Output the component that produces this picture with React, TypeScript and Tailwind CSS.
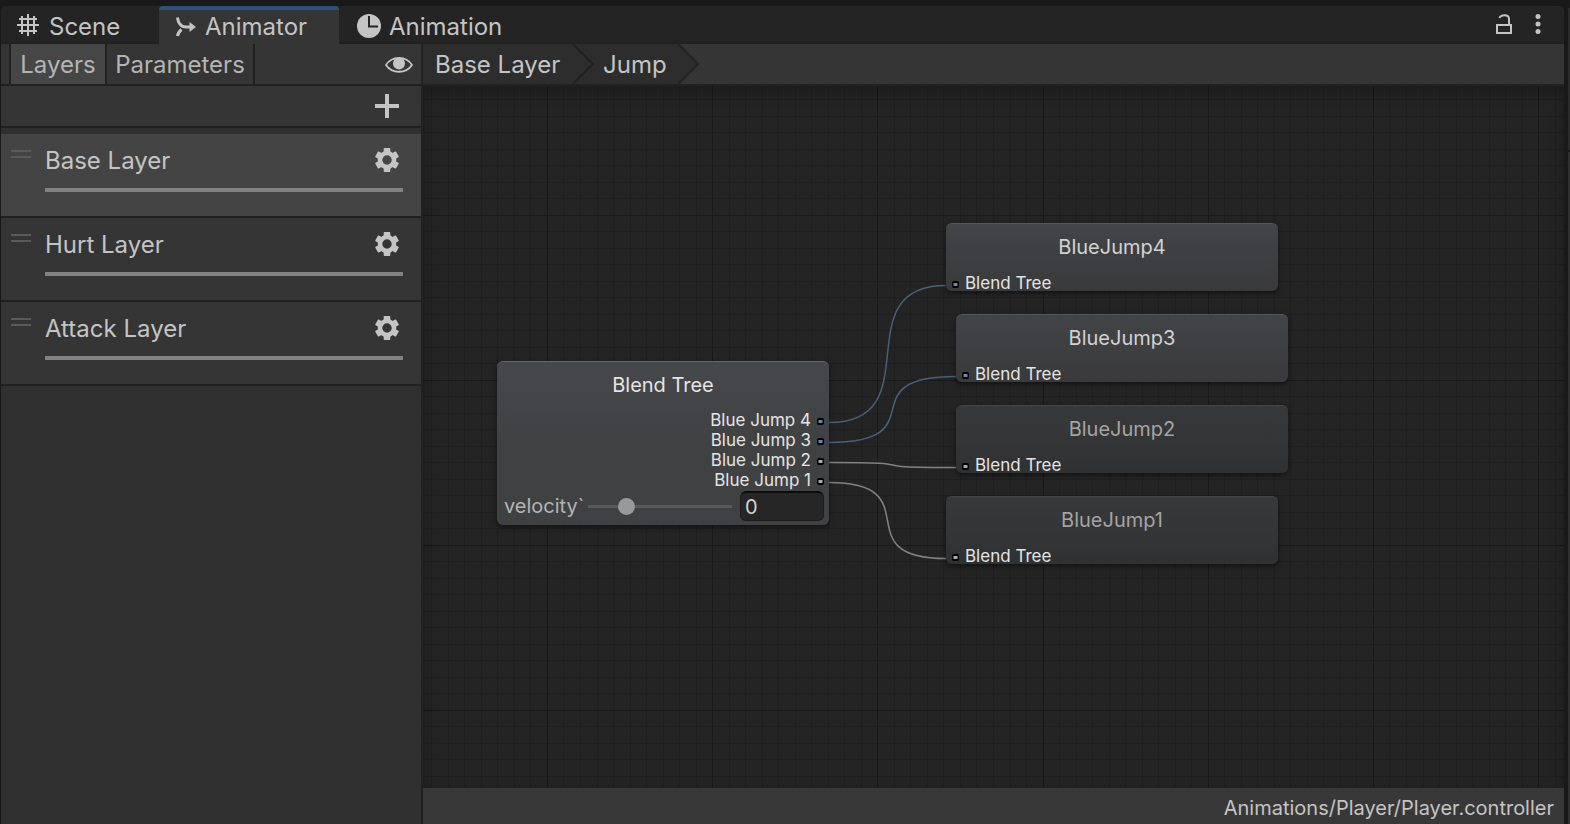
import React from "react";

type Tone = "blue" | "gray";

const wires: { d: string; tone: Tone }[] = [
  { d: "M406 336.5C509 336.5 420 199.5 523 199.5", tone: "blue" },
  { d: "M406 356.5C516 356.5 423 290.5 533 290.5", tone: "blue" },
  { d: "M406 376.5C516 376.5 423 381.5 533 381.5", tone: "gray" },
  { d: "M406 396.5C509 396.5 420 472.5 523 472.5", tone: "gray" },
];

const steps = Array.from({ length: 100 }, (_, i) => ({
  x: Math.floor(i * 16.52 + 0.45),
  y: Math.floor(i * 16.5),
  major: i % 10 === 0,
}));

function SceneIcon() {
  return (
    <svg className="mb-[2px] size-[22px]" viewBox="0 0 22 22" fill="none" stroke="#c4c4c4" strokeWidth="2" aria-hidden="true">
      <path d="M5 2V20M11 0V22M17 2V20M2 5H20M0 11H22M2 17H20" />
    </svg>
  );
}

function AnimatorIcon() {
  return (
    <svg className="h-5 w-[22px]" viewBox="0 0 22 20" fill="none" aria-hidden="true">
      <path d="M2.5 0.5C3 6 6 10 11 10H16" stroke="#c4c4c4" strokeWidth="3" />
      <path d="M2.5 19C3 16 4 14.500 6.500 12.5" stroke="#c4c4c4" strokeWidth="3" />
      <path d="M14.500 5L21 10L14.500 15Z" fill="#c4c4c4" />
    </svg>
  );
}

function ClockIcon() {
  return (
    <svg className="size-6" viewBox="0 0 24 24" aria-hidden="true">
      <circle cx="12" cy="12" r="12" fill="#c4c4c4" />
      <path d="M12 2V12.5H21" fill="none" stroke="#242424" strokeWidth="2" />
    </svg>
  );
}

function EyeIcon() {
  return (
    <svg className="h-[18px] w-7" viewBox="0 0 28 18" aria-hidden="true">
      <path d="M1 9C7 -0.5 21 -0.5 27 9C21 18 7 18 1 9Z" fill="none" stroke="#c4c4c4" strokeWidth="1.8" />
      <circle cx="14" cy="7.5" r="6" fill="#c4c4c4" />
    </svg>
  );
}

function LockIcon() {
  return (
    <svg className="h-5 w-4" viewBox="0 0 16 20" fill="none" stroke="#c4c4c4" strokeWidth="2" aria-hidden="true">
      <rect x="1" y="11" width="14" height="8" />
      <path d="M3.5 4C4.5 0.5 13 -0.5 13 5V11" />
    </svg>
  );
}

function GearIcon() {
  return (
    <svg className="size-6" viewBox="0 0 24 24" fill="#c4c4c4" aria-hidden="true">
      <circle cx="12" cy="12" r="7" fill="none" stroke="#c4c4c4" strokeWidth="4.6" />
      {[0, 60, 120, 180, 240, 300].map((a) => (
        <rect key={a} x="8.7" y="0" width="6.6" height="6" rx="0.8" transform={`rotate(${a} 12 12)`} />
      ))}
    </svg>
  );
}

function Port({ tone }: { tone: Tone }) {
  return (
    <svg className="mt-[2px] size-[7px] shrink-0" viewBox="0 0 7 7" aria-hidden="true">
      <rect width="7" height="7" rx="2" fill="#000" />
      <rect x="1.500" y="2" width="4" height="3" fill={tone === "blue" ? "#6c87b3" : "#aaaaaa"} />
    </svg>
  );
}

function LayerRow({ name, selected = false }: { name: string; selected?: boolean }) {
  return (
    <li className={`flex h-[84px] border-b-2 border-[#212121] pl-[10px] pr-[18px] ${selected ? "bg-[#444444]" : "bg-[#353535]"}`}>
      <span className="mt-4 h-2 w-5 shrink-0 border-y-2 border-[#5a5a5a]" />
      <div className="ml-[14px] flex grow flex-col">
        <div className="flex h-[54px] items-center justify-between pr-1">
          <span>{name}</span>
          <button type="button" className="pb-[2px]" aria-label={`${name} settings`}>
            <GearIcon />
          </button>
        </div>
        <div className="h-1 bg-[#828282]" />
      </div>
    </li>
  );
}

function MotionNode({ name, place, tone }: { name: string; place: string; tone: Tone }) {
  const colors =
    tone === "blue"
      ? "border-[#56575a] from-[#424447] to-[#3a3a3c] text-[#d2d2d2]"
      : "border-[#454648] from-[#38393b] to-[#303133] text-[#a4a4a4]";
  return (
    <div
      className={`absolute flex h-[68px] w-[332px] flex-col justify-between rounded-md border-t bg-linear-to-b shadow-[0_2px_5px_rgba(0,0,0,0.5)] ${colors} ${place}`}
    >
      <div className="pt-2 text-center text-[20px] leading-[30px]">{name}</div>
      <div className="flex items-center gap-[6px] pl-[6px] text-[17px] leading-4 text-[#e4e4e4]">
        <Port tone={tone} />
        Blend Tree
      </div>
    </div>
  );
}

function BlendTreeNode() {
  const outputs: { name: string; tone: Tone }[] = [
    { name: "Blue Jump 4", tone: "blue" },
    { name: "Blue Jump 3", tone: "blue" },
    { name: "Blue Jump 2", tone: "gray" },
    { name: "Blue Jump 1", tone: "gray" },
  ];
  return (
    <div className="absolute left-[74px] top-[275px] h-[164px] w-[332px] rounded-md border-t border-[#66676a] bg-linear-to-b from-[#47484b] via-[#3f4143] to-[#414144] shadow-[0_2px_5px_rgba(0,0,0,0.5)]">
      <div className="pt-2 text-center text-[20px] leading-[30px] text-[#e4e4e4]">Blend Tree</div>
      <ul className="mt-[10px] text-[17px] leading-5 text-[#e4e4e4]">
        {outputs.map((o) => (
          <li key={o.name} className="flex items-center justify-end gap-[6px] pr-[5px]">
            {o.name}
            <Port tone={o.tone} />
          </li>
        ))}
      </ul>
      <div className="flex h-8 items-center pl-[7px] pr-[5px] text-[20px] text-[#b4b4b4]">
        <label htmlFor="velocity" className="w-[82px] shrink-0 whitespace-nowrap">
          velocity`
        </label>
        <input
          id="velocity"
          type="range"
          min="0"
          max="100"
          defaultValue="24"
          className="ml-[2px] h-[18px] w-36 shrink-0 appearance-none bg-transparent [&::-webkit-slider-runnable-track]:h-[3px] [&::-webkit-slider-runnable-track]:bg-[#5a5a5a] [&::-webkit-slider-thumb]:-mt-[7px] [&::-webkit-slider-thumb]:size-[17px] [&::-webkit-slider-thumb]:appearance-none [&::-webkit-slider-thumb]:rounded-full [&::-webkit-slider-thumb]:bg-[#999999]"
        />
        <input
          type="text"
          aria-label="velocity value"
          defaultValue="0"
          className="ml-2 h-[30px] w-0 grow rounded-md border border-t-2 border-[#1c1c1c] border-t-[#0d0d0d] bg-[#262626] px-1 text-[#d2d2d2]"
        />
      </div>
    </div>
  );
}

function GraphCanvas() {
  return (
    <section className="relative grow overflow-hidden bg-[#242424]" aria-label="Blend tree graph">
      <svg className="absolute inset-0 size-full" aria-hidden="true">
        <defs>
          <pattern id="grid" x="124" y="129" width="1652" height="1650" patternUnits="userSpaceOnUse">
            {steps
              .slice()
              .sort((a, b) => Number(a.major) - Number(b.major))
              .map((s) => (
                <g key={s.x} fill={s.major ? "#191919" : "#1f1f1f"}>
                  <rect x={s.x} y="0" width="1" height="1650" />
                  <rect x="0" y={s.y} width="1652" height="1" />
                </g>
              ))}
          </pattern>
        </defs>
        <rect width="100%" height="100%" fill="url(#grid)" />
        {wires.map((w) => (
          <path key={w.d} d={w.d} fill="none" stroke={w.tone === "blue" ? "#48607f" : "#828282"} strokeWidth="1.5" />
        ))}
      </svg>
      <div className="absolute inset-0 shadow-[inset_0_6px_16px_rgba(0,0,0,0.25)]" />
      <BlendTreeNode />
      <MotionNode name="BlueJump4" tone="blue" place="left-[523px] top-[137px]" />
      <MotionNode name="BlueJump3" tone="blue" place="left-[533px] top-[228px]" />
      <MotionNode name="BlueJump2" tone="gray" place="left-[533px] top-[319px]" />
      <MotionNode name="BlueJump1" tone="gray" place="left-[523px] top-[410px]" />
    </section>
  );
}

export default function App() {
  return (
    <div className="flex h-screen bg-[#191919] pl-px pt-[6px] font-['Inter',sans-serif] text-[24px] leading-none text-[#c4c4c4]">
      <div className="flex min-w-0 grow flex-col overflow-hidden rounded-t-md bg-[#353535]">
        <header className="flex h-[38px] shrink-0 bg-[#242424]">
          <div className="flex grow" role="tablist">
            <button type="button" role="tab" className="flex w-[158px] items-center gap-[10px] border-b-2 border-[#212121] pl-4 pt-1">
              <SceneIcon />
              <span className="pt-[2px]">Scene</span>
            </button>
            <button type="button" role="tab" aria-selected="true" className="flex w-[180px] items-center gap-2 rounded-t border-t-4 border-[#2c527c] bg-[#353535] pl-4">
              <AnimatorIcon />
              <span>Animator</span>
            </button>
            <button type="button" role="tab" className="flex grow items-center gap-2 border-b-2 border-[#212121] pl-[18px] pt-1">
              <ClockIcon />
              <span className="pt-[2px]">Animation</span>
            </button>
          </div>
          <div className="flex items-center gap-[23px] border-b-2 border-[#212121] pr-[23px]">
            <button type="button" aria-label="Lock">
              <LockIcon />
            </button>
            <button type="button" aria-label="More options">
              <svg className="h-5 w-[6px]" viewBox="0 0 6 20" fill="#c4c4c4" aria-hidden="true">
                <circle cx="3" cy="2.500" r="2.500" />
                <circle cx="3" cy="10" r="2.500" />
                <circle cx="3" cy="17.500" r="2.500" />
              </svg>
            </button>
          </div>
        </header>
        <div className="flex min-h-0 grow">
          <aside className="flex w-[422px] shrink-0 flex-col border-r-2 border-[#212121] bg-[#303030]">
            <div className="flex h-[42px] shrink-0 border-b-2 border-[#212121] bg-[#353535] pl-2">
              <button type="button" className="w-[98px] border-x-2 border-[#212121] bg-[#464646] pt-[2px] text-[#b4b4b4]">
                Layers
              </button>
              <button type="button" className="w-[148px] border-r-2 border-[#212121] pt-[2px] text-[#b4b4b4]">
                Parameters
              </button>
              <button type="button" aria-label="Toggle panel" className="ml-auto pr-2 pt-[2px]">
                <EyeIcon />
              </button>
            </div>
            <div className="flex h-[42px] shrink-0 items-center justify-end border-b-2 border-[#212121] bg-[#353535] pr-[22px]">
              <button type="button" aria-label="Add layer">
                <svg className="size-6" viewBox="0 0 24 24" aria-hidden="true">
                  <path d="M12 0V24M0 12H24" stroke="#c4c4c4" strokeWidth="4" />
                </svg>
              </button>
            </div>
            <ul className="pt-[6px]">
              <LayerRow name="Base Layer" selected />
              <LayerRow name="Hurt Layer" />
              <LayerRow name="Attack Layer" />
            </ul>
          </aside>
          <main className="flex min-w-0 grow flex-col">
            <nav className="flex h-[42px] shrink-0 border-b-2 border-[#212121]" aria-label="Breadcrumb">
              <a href="#base-layer" className="flex w-[150px] items-center bg-[#2d2d2d] pl-3 pt-[2px]">
                Base Layer
              </a>
              <svg className="h-10 w-[21px] bg-[#2d2d2d]" viewBox="0 0 21 40" aria-hidden="true">
                <path d="M0 0L20 20L0 40" fill="none" stroke="#212121" strokeWidth="2" />
              </svg>
              <a href="#jump" className="flex w-[84px] items-center bg-[#2d2d2d] pl-[9px] pt-[2px]">
                Jump
              </a>
              <svg className="h-10 w-[21px]" viewBox="0 0 21 40" aria-hidden="true">
                <path d="M0 0L20 20L0 40" fill="#2d2d2d" stroke="#212121" strokeWidth="2" />
              </svg>
            </nav>
            <GraphCanvas />
            <footer className="flex h-9 shrink-0 items-center justify-end bg-[#383838] pr-[10px] pt-1 text-[20px]">
              Animations/Player/Player.controller
            </footer>
          </main>
        </div>
      </div>
      <div className="ml-1 mt-[2px] flex w-[2px] shrink-0 flex-col bg-[#303030]">
        <div className="h-36 border-b-2 border-[#191919] bg-[#2b2b2b]" />
      </div>
    </div>
  );
}
